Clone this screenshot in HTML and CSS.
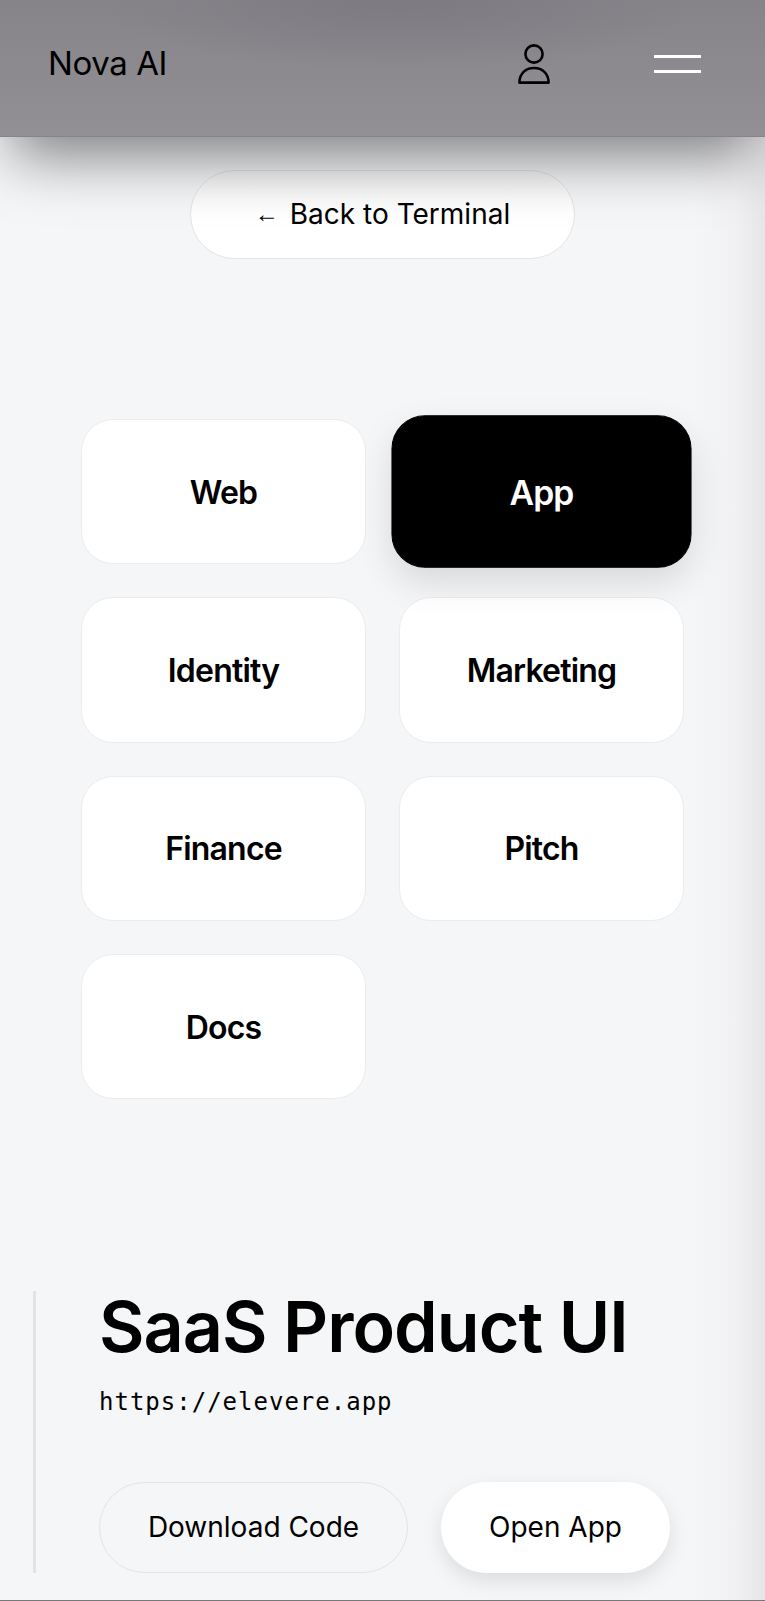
FILE: index.html
```html
<!DOCTYPE html>
<html lang="en">
<head>
<meta charset="utf-8">
<title>Nova AI</title>
<link rel="stylesheet" href="styles.css">
</head>
<body>
<header class="topbar">
  <div class="logo">Nova AI</div>
  <div class="actions">
    <svg class="user-icon" viewBox="0 0 36 42" width="36" height="42" fill="none" stroke="#000" stroke-width="2.6" aria-hidden="true">
      <circle cx="18" cy="11" r="8.6"/>
      <path d="M3.4 39.6c0-9.2 6.4-14.6 14.6-14.6s14.6 5.4 14.6 14.6z" stroke-linejoin="round"/>
    </svg>
    <div class="burger"><span></span><span></span></div>
  </div>
</header>
<main class="page">
  <div class="back-row"><a class="back"><span class="arrow">←</span> Back to Terminal</a></div>
  <div class="grid">
    <div class="card">Web</div>
    <div class="card active">App</div>
    <div class="card">Identity</div>
    <div class="card">Marketing</div>
    <div class="card">Finance</div>
    <div class="card">Pitch</div>
    <div class="card">Docs</div>
  </div>
  <section class="project">
    <h1 class="title">SaaS Product UI</h1>
    <p class="url">https://elevere.app</p>
    <div class="buttons">
      <a class="btn btn-outline">Download Code</a>
      <a class="btn btn-solid">Open App</a>
    </div>
  </section>
</main>
<div class="bottom-line"></div>
</body>
</html>
```
FILE: styles.css
```css
* { box-sizing: border-box; }
html, body { margin: 0; padding: 0; }
body {
  height: 1601px;
  overflow: hidden;
  display: flex;
  flex-direction: column;
  font-family: Inter, "Liberation Sans", sans-serif;
  color: #000;
  background: linear-gradient(to right, #f5f6f8 0, #f5f6f8 695px, #f1f1f3 735px, #e6e6e8 765px);
}
.topbar {
  position: relative;
  z-index: 2;
  flex: none;
  height: 137px;
  padding: 0 64px 8px 48px;
  display: flex;
  align-items: center;
  justify-content: space-between;
  background:
    radial-gradient(ellipse 300px 70px at 400px 0, #7d7b81 0%, rgba(125,123,129,0) 100%),
    linear-gradient(to bottom, #868489, #929095);
  box-shadow: 0 30px 60px -12px rgba(0,0,0,.5);
  border-bottom: 1px solid #85848a;
}
.logo { margin-bottom: 2px; font-size: 33px; font-weight: 400; letter-spacing: -0.4px; }
.actions { display: flex; align-items: center; gap: 102px; }
.user-icon { display: block; }
.burger { width: 47px; display: flex; flex-direction: column; gap: 12px; }
.burger span { display: block; height: 3px; background: #fff; }
.page { flex: 1; display: flex; flex-direction: column; padding: 33px 0 0; }
.back-row { display: flex; justify-content: center; }
.back {
  width: 385px;
  height: 89px;
  padding-bottom: 2px;
  display: flex;
  align-items: center;
  justify-content: center;
  gap: 11px;
  background: linear-gradient(to bottom, #f5f5f6, #fff 50%);
  border: 1.5px solid #e4e4e6;
  border-radius: 45px;
  font-size: 28px;
  font-weight: 400;
}
.arrow { font-size: 24px; font-family: "Liberation Sans", sans-serif; }
.grid {
  margin: 160px 81px 0;
  display: grid;
  grid-template-columns: 285px 285px;
  grid-auto-rows: 145.2px;
  column-gap: 33px;
  row-gap: 33.2px;
}
.card {
  display: flex;
  align-items: center;
  justify-content: center;
  padding-top: 1px;
  background: #fff;
  border: 1.5px solid #ececee;
  border-radius: 32px;
  font-size: 32px;
  font-weight: 600;
  letter-spacing: -0.8px;
}
.card.active {
  background: #000;
  color: #fff;
  border-color: #000;
  transform: scale(1.053);
  box-shadow: 0 14px 34px rgba(0,0,0,.12);
}
.project {
  margin: 191.6px 0 0 33px;
  padding-left: 63px;
  border-left: 3px solid #e3e3e6;
  height: 282px;
  display: flex;
  flex-direction: column;
}
.title {
  margin: 0;
  font-size: 70px;
  font-weight: 600;
  line-height: 72px;
  letter-spacing: -1px;
}
.url {
  margin: 23px 0 0;
  font-family: "DejaVu Sans Mono", monospace;
  font-size: 24px;
  line-height: 32px;
  letter-spacing: 1px;
}
.buttons { margin-top: auto; display: flex; gap: 33px; }
.btn {
  height: 91px;
  display: flex;
  align-items: center;
  justify-content: center;
  border-radius: 46px;
  font-size: 28px;
  font-weight: 420;
  letter-spacing: 0;
}
.btn-outline { width: 309px; border: 1.5px solid #e3e3e6; }
.btn-solid { width: 229px; background: #fff; box-shadow: 0 8px 20px rgba(0,0,0,.1); }
.bottom-line { flex: none; height: 1px; background: #77777b; }
```
